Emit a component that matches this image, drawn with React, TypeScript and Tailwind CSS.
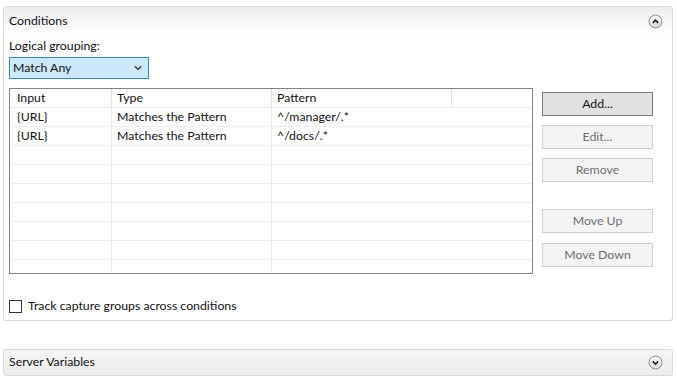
import React from 'react';

const font = { fontFamily: 'Lato, "Open Sans", sans-serif' };

const CircleChevron: React.FC<{ up?: boolean }> = ({ up }) => (
  <svg width="15" height="15" viewBox="0 0 15 15">
    <defs>
      <linearGradient id={up ? 'cg-up' : 'cg-down'} x1="0" y1="0" x2="0" y2="1">
        <stop offset="0%" stopColor="#ffffff" />
        <stop offset="100%" stopColor="#d6d6d6" />
      </linearGradient>
    </defs>
    <circle cx="7.5" cy="7.5" r="6.5" fill={`url(#${up ? 'cg-up' : 'cg-down'})`} stroke="#8f8f8f" strokeWidth="1" />
    {up ? (
      <path d="M4.8 8.8 L7.5 6.1 L10.2 8.8" fill="none" stroke="#1f1f1f" strokeWidth="1.7" />
    ) : (
      <path d="M4.8 6.4 L7.5 9.1 L10.2 6.4" fill="none" stroke="#1f1f1f" strokeWidth="1.7" />
    )}
  </svg>
);

const rows = [
  { input: '{URL}', type: 'Matches the Pattern', pattern: '^/manager/.*' },
  { input: '{URL}', type: 'Matches the Pattern', pattern: '^/docs/.*' },
  { input: '', type: '', pattern: '' },
  { input: '', type: '', pattern: '' },
  { input: '', type: '', pattern: '' },
  { input: '', type: '', pattern: '' },
  { input: '', type: '', pattern: '' },
  { input: '', type: '', pattern: '' },
  { input: '', type: '', pattern: '' },
];

const Btn: React.FC<{ label: string; primary?: boolean; className?: string }> = ({ label, primary, className }) => (
  <div
    className={`h-[24px] w-[111px] flex items-center justify-center text-[12.3px] ${
      primary
        ? 'bg-[#e1e1e1] border border-[#7a7a7a] text-[#111]'
        : 'bg-[#f4f4f4] border border-[#cfcfcf] text-[#6e6e6e]'
    } ${className ?? ''}`}
  >
    {label}
  </div>
);

export default function App() {
  return (
    <div className="w-[677px] h-[380px] bg-white overflow-hidden pt-[6px] pl-[3px]" style={font}>
      {/* Conditions */}
      <div className="w-[670px] h-[315px] border border-[#d8d8d8] rounded-[3px] flex flex-col">
        <div className="h-[28px] flex items-center justify-between pl-[5px] pr-[9px] bg-gradient-to-b from-[#ededed] to-white rounded-t-[3px]">
          <span className="text-[12.3px] text-[#111]">Conditions</span>
          <CircleChevron up />
        </div>
        <div className="pl-[5px] flex flex-col">
          <div className="mt-[3px] h-[16px] leading-[16px] text-[12.3px] text-[#111]">Logical grouping:</div>
          <div className="mt-[3px] w-[140px] h-[22px] border border-[#3d86c2] bg-[#cde8fb] flex items-center justify-between pl-[3px] pr-[6px]">
            <span className="text-[12.3px] text-[#111]">Match Any</span>
            <svg width="8" height="6" viewBox="0 0 8 6">
              <path d="M0.8 1.2 L4 4.4 L7.2 1.2" fill="none" stroke="#333" strokeWidth="1.3" />
            </svg>
          </div>
          <div className="mt-[9px] flex">
            <div className="w-[524px] h-[186px] border border-[#838383] overflow-hidden bg-white">
              <div className="flex h-[19px] pl-[2px] border-b border-[#ececec] text-[12.3px] text-[#111]">
                <div className="w-[100px] pl-[5px] flex items-center border-r border-[#e3e3e3]">Input</div>
                <div className="w-[160px] pl-[5px] flex items-center border-r border-[#e3e3e3]">Type</div>
                <div className="w-[180px] pl-[5px] flex items-center border-r border-[#e3e3e3]">Pattern</div>
              </div>
              {rows.map((r, i) => (
                <div key={i} className="flex h-[19px] ml-[2px] border-b border-[#ececec] text-[12.3px] text-[#111]">
                  <div className="w-[100px] pl-[5px] flex items-center border-r border-[#ececec]">{r.input}</div>
                  <div className="w-[160px] pl-[5px] flex items-center border-r border-[#ececec]">{r.type}</div>
                  <div className="flex-1 pl-[5px] flex items-center">{r.pattern}</div>
                </div>
              ))}
            </div>
            <div className="ml-[9px] pt-[4px] flex flex-col">
              <Btn label="Add..." primary />
              <Btn label="Edit..." className="mt-[9px]" />
              <Btn label="Remove" className="mt-[9px]" />
              <Btn label="Move Up" className="mt-[27px]" />
              <Btn label="Move Down" className="mt-[10px]" />
            </div>
          </div>
          <div className="mt-[23px] flex items-center">
            <div className="w-[13px] h-[13px] border border-[#333] bg-white" />
            <span className="ml-[6px] text-[12.3px] text-[#111]">Track capture groups across conditions</span>
          </div>
        </div>
      </div>

      {/* Server Variables */}
      <div className="mt-[28px] w-[670px] h-[27px] border border-[#d8d8d8] rounded-[3px] flex items-center justify-between pl-[5px] pr-[9px] bg-gradient-to-b from-[#f6f6f6] to-[#ececec]">
        <span className="text-[12.3px] text-[#111]">Server Variables</span>
        <CircleChevron />
      </div>
    </div>
  );
}
